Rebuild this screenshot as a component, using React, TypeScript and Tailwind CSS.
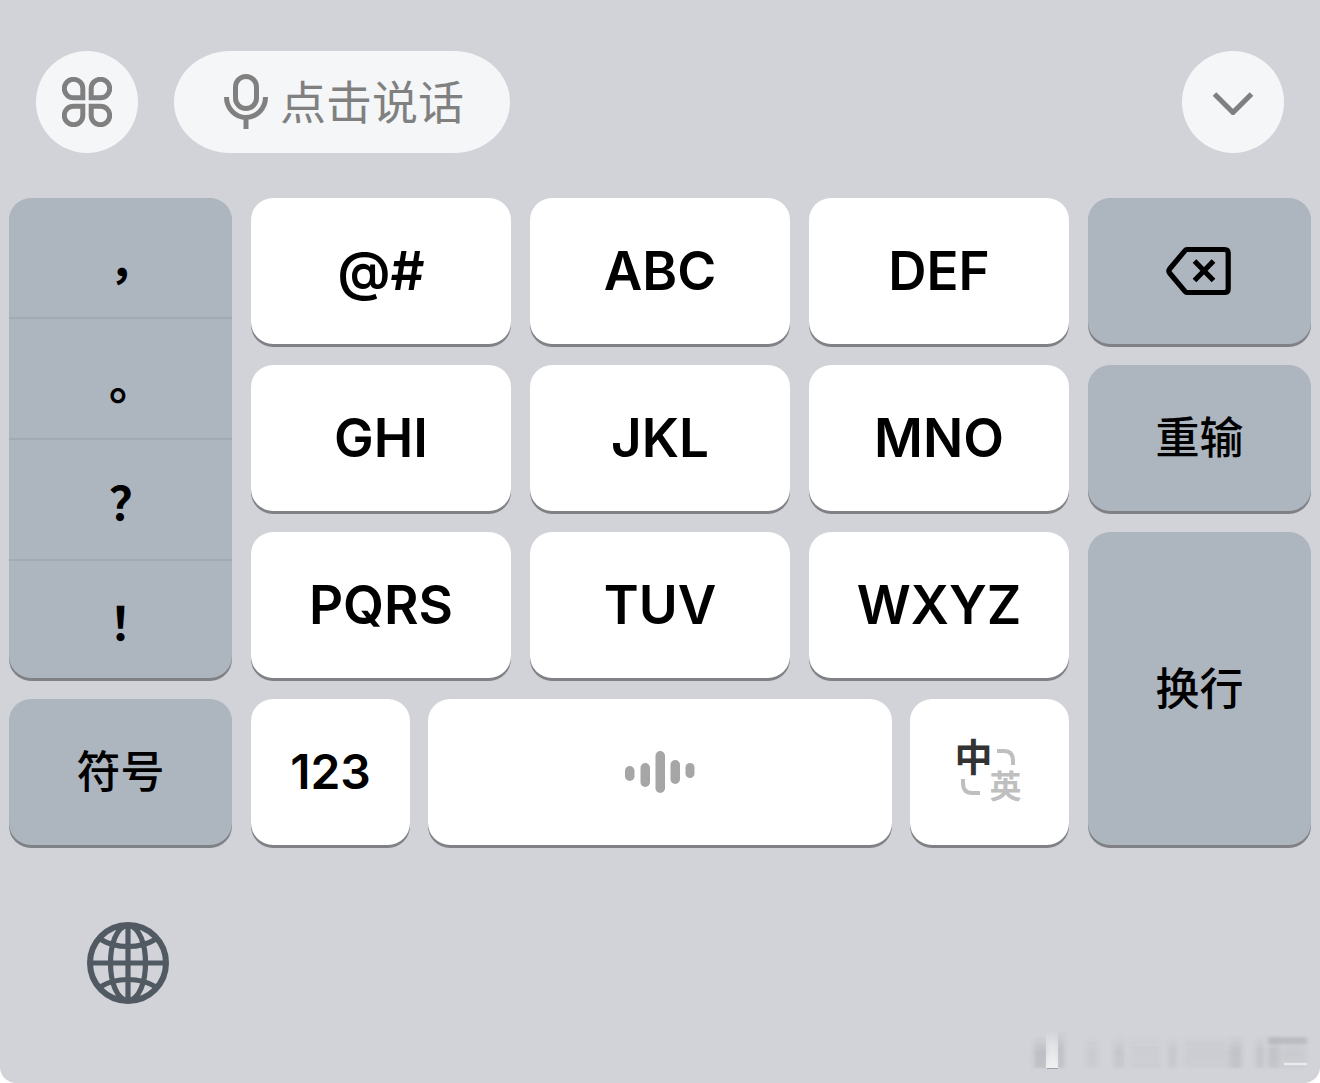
import type { ReactNode } from 'react';
import clsx from 'clsx';

interface KeyProps {
  children: ReactNode;
  label?: string;
  tone?: 'light' | 'dark';
  className?: string;
}

const letterKeys = ['@#', 'ABC', 'DEF', 'GHI', 'JKL', 'MNO', 'PQRS', 'TUV', 'WXYZ'];
const punctuation = ['，', '。', '？', '！'];

// faint vertical smears of the watermark: [x, width, opacity]
const smears = [
  [56, 12, 0.06],
  [84, 10, 0.1],
  [100, 30, 0.04],
  [138, 9, 0.09],
  [154, 46, 0.05],
  [200, 12, 0.13],
  [226, 8, 0.12],
  [238, 12, 0.12],
  [252, 24, 0.06],
];

function Key({ children, label, tone = 'light', className }: KeyProps) {
  return (
    <button
      type="button"
      aria-label={label}
      className={clsx(
        'flex min-w-0 items-center justify-center rounded-[22px] shadow-[0_3px_0_#7f8185]',
        tone === 'light' ? 'bg-white' : 'bg-[#adb5bf]',
        className,
      )}
    >
      {children}
    </button>
  );
}

function CloverIcon() {
  return (
    <svg width="50" height="50" viewBox="0 0 50 50" fill="none" stroke="#808080" strokeWidth="5">
      <path d="M20.8 20.8H11.75A9.25 9.25 0 1 1 20.8 11.75Z" />
      <path d="M29.2 20.8H38.25A9.25 9.25 0 1 0 29.2 11.75Z" />
      <path d="M20.8 29.2H11.75A9.25 9.25 0 1 0 20.8 38.25Z" />
      <path d="M29.2 29.2H38.25A9.25 9.25 0 1 1 29.2 38.25Z" />
    </svg>
  );
}

function MicIcon() {
  return (
    <svg width="44" height="56" viewBox="0 0 44 56" fill="none" stroke="#808080" strokeWidth="5">
      <rect x="11.5" y="2.5" width="21" height="32" rx="10.5" />
      <path d="M2.5 23A19.5 20.5 0 0 0 41.5 23M22 43V55" />
    </svg>
  );
}

function ChevronIcon() {
  return (
    <svg width="42" height="26" viewBox="0 0 42 26" fill="none" stroke="#808080" strokeWidth="5.2">
      <path d="M2.5 5L21 23.5L39.5 5" strokeLinejoin="round" />
    </svg>
  );
}

function BackspaceIcon() {
  return (
    <svg width="68" height="50" viewBox="0 0 68 50" fill="none" stroke="#000" strokeWidth="5.2" strokeLinejoin="round">
      <path d="M21 3.5H58.5Q62.2 3.5 62.2 7.2V42.8Q62.2 46.5 58.5 46.5H21Q19.8 46.5 18.8 45.2L3.6 27Q2.1 25 3.6 23L18.8 4.8Q19.8 3.5 21 3.5Z" />
      <path d="M28.5 15L47.5 34.5M47.5 15L28.5 34.5" />
    </svg>
  );
}

function WaveIcon() {
  return (
    <svg width="70" height="42" viewBox="0 0 70 42" fill="#a6a6a6">
      <rect x="0" y="15" width="9.5" height="15" rx="4.7" />
      <rect x="15.5" y="12" width="9.5" height="24" rx="4.7" />
      <rect x="30.5" y="0" width="9.5" height="42" rx="4.7" />
      <rect x="45.5" y="9" width="9.5" height="24" rx="4.7" />
      <rect x="60.5" y="12" width="9" height="15" rx="4.5" />
    </svg>
  );
}

function GlobeIcon() {
  return (
    <svg width="82" height="82" viewBox="0 0 82 82" fill="none" stroke="#515962" strokeWidth="5.2">
      <circle cx="41" cy="41" r="38" strokeWidth="6" />
      <path d="M41 3C29 5 23.5 23 23.5 41S29 77 41 79C53 77 58.5 59 58.5 41S53 5 41 3Z" />
      <path d="M41 3V79M3 41H79M13 17Q25 24.5 41 24.5T69 17M13 65Q25 57.5 41 57.5T69 65" />
    </svg>
  );
}

function Watermark() {
  return (
    <svg width="280" height="48" viewBox="0 0 280 48" aria-hidden="true">
      <defs>
        <linearGradient id="fade" x1="0" y1="0" x2="0" y2="1">
          <stop offset="0" stopColor="#50545c" stopOpacity="0" />
          <stop offset="0.5" stopColor="#50545c" />
          <stop offset="1" stopColor="#50545c" stopOpacity="0.8" />
        </linearGradient>
        <linearGradient id="shine" x1="0" y1="0" x2="0" y2="1">
          <stop offset="0" stopColor="#fff" stopOpacity="0" />
          <stop offset="0.4" stopColor="#fff" stopOpacity="0.4" />
          <stop offset="1" stopColor="#fff" stopOpacity="0.7" />
        </linearGradient>
        <filter id="soft" x="-20%" y="-20%" width="140%" height="140%">
          <feGaussianBlur stdDeviation="2 1" />
        </filter>
      </defs>
      <g filter="url(#soft)">
        <rect x="4" y="10" width="14" height="31" fill="url(#fade)" opacity="0.16" />
        <rect x="27" y="4" width="7" height="37" fill="url(#fade)" opacity="0.16" />
        {smears.map(([x, width, opacity]) => (
          <rect key={x} x={x} y="8" width={width} height="33" fill="url(#fade)" opacity={opacity} />
        ))}
        <rect x="238" y="10" width="39" height="7" fill="#50545c" opacity="0.16" />
      </g>
      <rect x="16" y="4" width="12" height="37" fill="url(#shine)" />
      <path d="M17 41.5H28" stroke="#8b8d91" strokeWidth="1" opacity="0.7" />
      <path d="M254 37H277" stroke="#fff" strokeWidth="2.5" opacity="0.6" />
    </svg>
  );
}

export default function App() {
  return (
    <main className="flex min-h-screen flex-col rounded-b-[16px] bg-[#d2d3d8] font-['Inter','Noto_Sans_CJK_SC',sans-serif] text-black">
      <header className="flex items-center px-9 pt-[51px] pb-[45px]">
        <button
          type="button"
          aria-label="菜单"
          className="flex size-[102px] items-center justify-center rounded-full bg-[#f5f6f8]"
        >
          <CloverIcon />
        </button>
        <button
          type="button"
          className="ml-9 flex h-[102px] w-[336px] items-center justify-center gap-3 rounded-[56px/51px] bg-[#f5f6f8] pl-1 text-[46px] leading-none text-[#808080]"
        >
          <MicIcon />
          点击说话
        </button>
        <button
          type="button"
          aria-label="收起键盘"
          className="ml-auto flex size-[102px] items-center justify-center rounded-full bg-[#f5f6f8]"
        >
          <ChevronIcon />
        </button>
      </header>

      <section className="grid auto-rows-[146px] grid-cols-[223fr_260fr_260fr_260fr_223fr] gap-x-[19px] gap-y-[21px] px-[9px]">
        <div className="col-start-1 row-span-3 row-start-1 grid grid-rows-[121px_121px_121px_1fr] divide-y-2 divide-[#a1aab5] overflow-hidden rounded-[22px] bg-[#adb5bf] shadow-[0_3px_0_#7f8185]">
          {punctuation.map((mark) => (
            <button
              key={mark}
              type="button"
              className="flex items-center justify-center font-['Noto_Sans_CJK_SC',sans-serif] text-[46px] leading-none font-bold [font-feature-settings:'halt']"
            >
              {mark}
            </button>
          ))}
        </div>
        <Key tone="dark" className="col-start-1 row-start-4 text-[44px] font-medium">
          符号
        </Key>

        <div className="col-span-3 col-start-2 row-span-3 row-start-1 grid grid-cols-3 grid-rows-3 gap-x-[19px] gap-y-[21px]">
          {letterKeys.map((letters) => (
            <Key key={letters} className="text-[53px] leading-none font-semibold">
              {letters}
            </Key>
          ))}
        </div>

        <div className="col-span-3 col-start-2 row-start-4 grid grid-cols-[159fr_464fr_159fr] gap-x-[18px]">
          <Key className="text-[48px] leading-none font-semibold">123</Key>
          <Key label="空格">
            <WaveIcon />
          </Key>
          <Key>
            <span className="grid grid-cols-[32px_32px] grid-rows-[30px_30px] place-items-center leading-none">
              <span className="text-[38px] leading-none font-bold text-[#333]">中</span>
              <svg width="20" height="18" viewBox="0 0 20 18" fill="none" stroke="#bfbfbf" strokeWidth="4">
                <path d="M1 3H8Q17 3 17 13V17" />
              </svg>
              <svg width="28" height="18" viewBox="0 0 28 18" fill="none" stroke="#bfbfbf" strokeWidth="4">
                <path d="M3 1V5Q3 15 12 15H20" />
              </svg>
              <span className="text-[32px] leading-none font-bold text-[#bfbfbf]">英</span>
            </span>
          </Key>
        </div>

        <Key tone="dark" label="删除" className="col-start-5 row-start-1">
          <BackspaceIcon />
        </Key>
        <Key tone="dark" className="col-start-5 row-start-2 text-[44px] font-medium">
          重输
        </Key>
        <Key tone="dark" className="col-start-5 row-span-2 row-start-3 text-[44px] font-medium">
          换行
        </Key>
      </section>

      <footer className="flex flex-1 items-end justify-between pt-[77px] pr-[10px] pb-2 pl-[87px]">
        <button type="button" aria-label="切换输入法" className="self-start">
          <GlobeIcon />
        </button>
        <Watermark />
      </footer>
    </main>
  );
}
